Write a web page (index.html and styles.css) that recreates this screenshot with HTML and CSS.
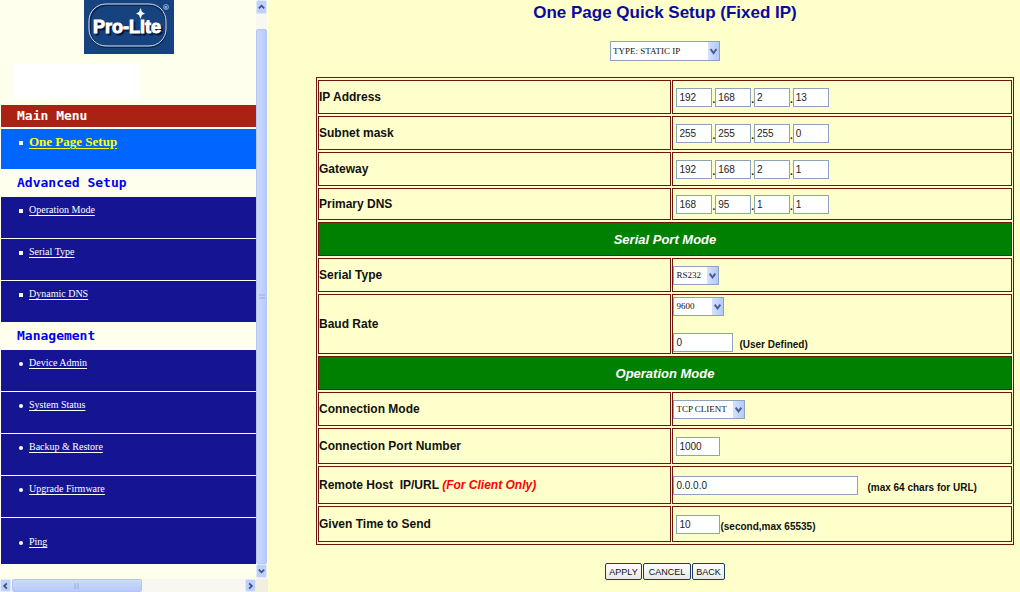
FILE: index.html
```html
<!DOCTYPE html>
<html lang="en">
<head>
<meta charset="utf-8">
<title>One Page Quick Setup</title>
<link rel="stylesheet" href="styles.css">
</head>
<body>
<div class="frames">
  <aside class="sidebar">
    <div class="sidebar-content">
      <div class="brand">
        <svg class="logo" viewBox="0 0 90 54" role="img" aria-label="Pro-Lite">
          <rect width="90" height="54" fill="#16427f"/>
          <rect x="6" y="5" width="76" height="42" rx="17" fill="none" stroke="#0a2450" stroke-width="2"/>
          <rect x="5" y="4" width="77" height="42" rx="17" fill="none" stroke="#dce8fa" stroke-width="1"/>
          <text class="logo-shadow" x="45" y="35" text-anchor="middle">Pro-Lite</text>
          <text class="logo-text" x="43" y="33" text-anchor="middle">Pro-Lite</text>
          <path d="M56.500 8l1.500 4 3 1.500-3 1.500-1.500 4-1.500-4-3-1.500 3-1.500z" fill="#fff"/>
          <circle cx="82" cy="7" r="2.500" fill="none" stroke="#b9cae6" stroke-width=".7"/>
          <text class="logo-mark" x="82" y="9" text-anchor="middle">R</text>
        </svg>
      </div>
      <div class="blank-panel"></div>
      <h2 class="menu-title menu-title-main">Main Menu</h2>
      <ul class="menu menu-current">
        <li><a href="#one-page">One Page Setup</a></li>
      </ul>
      <h2 class="menu-title">Advanced Setup</h2>
      <ul class="menu">
        <li><a href="#operation">Operation Mode</a></li>
        <li><a href="#serial">Serial Type</a></li>
        <li><a href="#ddns">Dynamic DNS</a></li>
      </ul>
      <h2 class="menu-title">Management</h2>
      <ul class="menu menu-round">
        <li><a href="#admin">Device Admin</a></li>
        <li><a href="#status">System Status</a></li>
        <li><a href="#backup">Backup &amp; Restore</a></li>
        <li><a href="#firmware">Upgrade Firmware</a></li>
        <li class="menu-last"><a href="#ping">Ping</a></li>
      </ul>
    </div>
    <div class="vbar">
      <button class="arrow" type="button" aria-label="Scroll up"><svg viewBox="0 0 10 10"><path d="M2 6.500L5 3.500l3 3"/></svg></button>
      <div class="vthumb"><svg viewBox="0 0 6 6"><path d="M0 1h6M0 4h6"/></svg></div>
      <button class="arrow" type="button" aria-label="Scroll down"><svg viewBox="0 0 10 10"><path d="M2 3.500l3 3 3-3"/></svg></button>
    </div>
    <div class="hbar">
      <button class="arrow" type="button" aria-label="Scroll left"><svg viewBox="0 0 10 10"><path d="M6.500 2l-3 3 3 3"/></svg></button>
      <div class="hthumb"><svg viewBox="0 0 6 6"><path d="M1 0v6M4 0v6"/></svg></div>
      <button class="arrow" type="button" aria-label="Scroll right"><svg viewBox="0 0 10 10"><path d="M3.500 2l3 3-3 3"/></svg></button>
    </div>
    <div class="corner"></div>
  </aside>

  <main class="main">
    <h1 class="title">One Page Quick Setup (Fixed IP)</h1>
    <form class="setup">
      <span class="pick pick-type"><select aria-label="Connection type"><option>TYPE: STATIC IP</option></select><svg viewBox="0 0 10 18"><path d="M2 7l3 4 3-4"/></svg></span>
      <table class="grid">
        <tr>
          <th scope="row">IP Address</th>
          <td><div class="line inset"><input class="octet" aria-label="IP Address 1" value="192">.<input class="octet" aria-label="IP Address 2" value="168">.<input class="octet" aria-label="IP Address 3" value="2">.<input class="octet" aria-label="IP Address 4" value="13"></div></td>
        </tr>
        <tr>
          <th scope="row">Subnet mask</th>
          <td><div class="line inset"><input class="octet" aria-label="Subnet mask 1" value="255">.<input class="octet" aria-label="Subnet mask 2" value="255">.<input class="octet" aria-label="Subnet mask 3" value="255">.<input class="octet" aria-label="Subnet mask 4" value="0"></div></td>
        </tr>
        <tr>
          <th scope="row">Gateway</th>
          <td><div class="line inset"><input class="octet" aria-label="Gateway 1" value="192">.<input class="octet" aria-label="Gateway 2" value="168">.<input class="octet" aria-label="Gateway 3" value="2">.<input class="octet" aria-label="Gateway 4" value="1"></div></td>
        </tr>
        <tr class="row-short">
          <th scope="row">Primary DNS</th>
          <td><div class="line inset"><input class="octet" aria-label="Primary DNS 1" value="168">.<input class="octet" aria-label="Primary DNS 2" value="95">.<input class="octet" aria-label="Primary DNS 3" value="1">.<input class="octet" aria-label="Primary DNS 4" value="1"></div></td>
        </tr>
        <tr><th class="section" colspan="2">Serial Port Mode</th></tr>
        <tr>
          <th scope="row"><label for="serial-type">Serial Type</label></th>
          <td><div class="line"><span class="pick pick-serial"><select id="serial-type"><option>RS232</option></select><svg viewBox="0 0 10 18"><path d="M2 7l3 4 3-4"/></svg></span></div></td>
        </tr>
        <tr class="row-baud">
          <th scope="row"><label for="baud">Baud Rate</label></th>
          <td>
            <div class="stack">
              <div class="line"><span class="pick pick-baud"><select id="baud"><option>9600</option></select><svg viewBox="0 0 10 18"><path d="M2 7l3 4 3-4"/></svg></span></div>
              <div class="line"><input class="custom" id="custom-baud" value="0"><label class="note" for="custom-baud">(User Defined)</label></div>
            </div>
          </td>
        </tr>
        <tr><th class="section" colspan="2">Operation Mode</th></tr>
        <tr>
          <th scope="row"><label for="conn-mode">Connection Mode</label></th>
          <td><div class="line"><span class="pick pick-mode"><select id="conn-mode"><option>TCP CLIENT</option></select><svg viewBox="0 0 10 18"><path d="M2 7l3 4 3-4"/></svg></span></div></td>
        </tr>
        <tr class="row-tall">
          <th scope="row"><label for="port">Connection Port Number</label></th>
          <td><div class="line inset"><input class="number" id="port" value="1000"></div></td>
        </tr>
        <tr class="row-host">
          <th scope="row"><label for="host">Remote Host &nbsp;IP/URL <em class="only">(For Client Only)</em></label></th>
          <td><div class="line"><input class="host" id="host" value="0.0.0.0"><span class="note note-far">(max 64 chars for URL)</span></div></td>
        </tr>
        <tr class="row-tall">
          <th scope="row"><label for="send">Given Time to Send</label></th>
          <td><div class="line inset"><input class="number" id="send" value="10"><span>(second,max 65535)</span></div></td>
        </tr>
      </table>
      <div class="actions">
        <button class="btn" type="submit">APPLY</button>
        <button class="btn btn-wide" type="reset">CANCEL</button>
        <button class="btn" type="button">BACK</button>
      </div>
    </form>
  </main>
</div>
</body>
</html>
```

FILE: styles.css
```css
* { box-sizing: border-box; }

body {
  margin: 0;
  background: #ffffcc;
  color: #111;
  font-family: "Liberation Sans", sans-serif;
}

.frames { display: flex; min-height: 100vh; }

/* Sidebar frame */
.sidebar {
  flex: none;
  width: 268px;
  display: grid;
  grid-template-columns: 1fr 12px;
  grid-template-rows: 1fr 13px;
  background: #ffffee;
}
.sidebar-content { padding-left: 1px; }
.brand { display: flex; justify-content: center; }
.logo { display: block; width: 90px; height: 54px; }
.logo-text, .logo-shadow {
  font: bold 18px "Liberation Sans", sans-serif;
  fill: #fff;
  stroke: #fff;
}
.logo-shadow { fill: #061a3d; stroke: #061a3d; }
.logo-mark { font: bold 4px "Liberation Sans", sans-serif; fill: #b9cae6; }
.blank-panel { width: 126px; height: 35px; margin: 10px 13px 6px; background: #fff; }

.menu-title {
  margin: 0;
  padding-left: 16px;
  color: #0000f0;
  font: bold 13px/28px "DejaVu Sans Mono", monospace;
}
.menu-title-main {
  margin-bottom: 2px;
  background: #a92213;
  color: #fff;
  line-height: 22px;
}

.menu {
  display: flex;
  flex-direction: column;
  gap: 1px;
  margin: 0;
  padding: 0;
  list-style: none;
  font: 10px/14px "Liberation Serif", serif;
}
.menu li {
  display: flex;
  min-height: 41px;
  padding: 6px 0 0 18px;
  background: #151594;
  color: #fff;
}
.menu li::before {
  content: "";
  width: 4px;
  height: 4px;
  margin: 6px 6px 0 0;
  background: #fff;
}
.menu-round li::before { border-radius: 50%; }
.menu a { color: inherit; text-underline-offset: 2px; }
.menu-current { font-size: 13px; font-weight: bold; }
.menu-current li { min-height: 40px; background: #0066ff; }
.menu-current a { color: #ffff00; }
.menu .menu-last { min-height: 46px; padding-top: 17px; }

/* Scroll bars */
.vbar, .hbar { display: flex; background: #f8f7f2; }
.vbar { flex-direction: column; width: 11px; padding-bottom: 1px; }
.arrow {
  flex: none;
  width: 11px;
  height: 14px;
  padding: 0;
  border: 1px solid #dfe8fd;
  border-radius: 2px;
  background: #bfd0fb;
}
.arrow svg { display: block; width: 9px; height: 10px; }
.arrow path { fill: none; stroke: #3c5684; stroke-width: 2; }
.vthumb, .hthumb {
  display: flex;
  align-items: center;
  justify-content: center;
  border: 1px solid #b3c5f2;
  border-radius: 2px;
}
.vthumb { flex: 1; margin-top: 15px; background: linear-gradient(90deg, #cbdafe, #b7cafa); }
.hthumb { width: 130px; margin: 0 auto 0 1px; background: linear-gradient(#cbdafe, #b7cafa); }
.vthumb svg, .hthumb svg { width: 6px; height: 6px; }
.vthumb path, .hthumb path { stroke: #93abdf; }
.hbar .arrow { height: 13px; }
.corner { background: #f1efdf; }

/* Setup frame */
.main { flex: 1; min-width: 0; padding: 2px 6px 8px 48px; }
.title {
  margin: 0 0 17px;
  color: #0a0a9c;
  font-size: 17px;
  line-height: 22px;
  text-align: center;
}
.setup { display: flex; flex-direction: column; align-items: center; }

.grid {
  width: 100%;
  margin: 16px 0 18px;
  border: 1px solid #6e160c;
  border-spacing: 1px 2px;
  font-size: 12px;
}
.grid th, .grid td {
  height: 34px;
  padding: 0;
  border: 1px solid #6e160c;
  font-weight: bold;
  text-align: left;
}
.grid th { width: 51%; }
.grid .section {
  background: #008000;
  color: #fff;
  font-size: 13px;
  font-style: italic;
  text-align: center;
}
.grid .row-short > * { height: 32px; }
.grid .row-tall > * { height: 36px; }
.grid .row-host > * { height: 38px; }
.grid .row-baud > * { height: 60px; }
.only { color: #f00; }

.line { display: flex; align-items: flex-end; font-size: 10px; line-height: 14px; }
.inset { padding-left: 3px; }
.stack { display: flex; flex-direction: column; gap: 17px; }
.note { margin-left: 6px; }
.note-far { margin-left: 9px; }

input {
  height: 19px;
  padding: 0 2px;
  border: 1px solid #8ba3bb;
  border-radius: 0;
  background: #fff;
  color: #222;
  font: 10px "Liberation Sans", sans-serif;
}
.octet { width: 36px; }
.number { width: 44px; }
.custom { width: 60px; }
.host { width: 185px; }

.pick { position: relative; display: block; height: 19px; }
.pick select {
  display: block;
  width: 100%;
  height: 100%;
  padding: 0 2px;
  appearance: none;
  border: 1px solid #8ba3bb;
  border-radius: 0;
  background: #fff;
  color: #111;
  font: 9px "Liberation Serif", serif;
}
.pick svg {
  position: absolute;
  top: 1px;
  right: 1px;
  width: 11px;
  height: calc(100% - 2px);
  background: linear-gradient(90deg, #d5e1fd, #b4c9f8);
  pointer-events: none;
}
.pick path { fill: none; stroke: #45608f; stroke-width: 2; }
.pick-type { width: 110px; height: 20px; }
.pick-serial { width: 46px; }
.pick-baud { width: 51px; }
.pick-mode { width: 72px; }

.actions { display: flex; gap: 1px; }
.btn {
  height: 17px;
  padding: 0 3px;
  border: 1px solid #1d3a66;
  border-radius: 2px;
  background: linear-gradient(#fff, #e9e8e0);
  color: #111;
  font: 9px "Liberation Sans", sans-serif;
}
.btn-wide { padding: 0 5px; }
```
